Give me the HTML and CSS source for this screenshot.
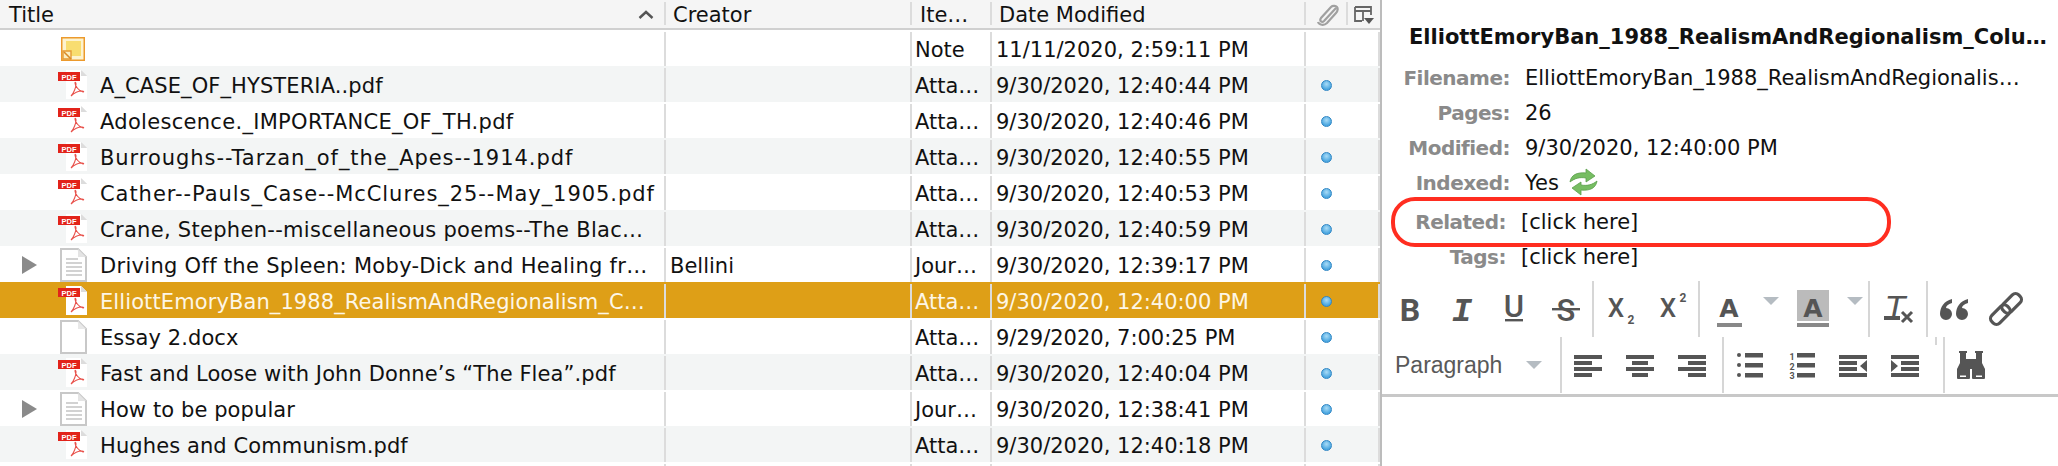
FILE: index.html
```html
<!DOCTYPE html>
<html lang="en">
<head>
    <meta charset="UTF-8">
    <title>Items</title>
    <link rel="stylesheet" href="styles.css">
</head>
<body>
<svg class="defs" width="0" height="0">
    <defs>
        <symbol id="i-pdf" viewBox="0 0 30 30">
            <path d="M9 1h15l5 5v23H9z" fill="#c9c9c9"/>
            <path d="M8 0h15l6 6v23H8z" fill="#fff"/>
            <path d="M23 0l6 6h-6z" fill="#dcdcdc"/>
            <rect x="0" y="2" width="22" height="9" fill="#e2231a"/>
            <text class="pdf-tag" x="11" y="9.6">PDF</text>
            <path d="M13 26c3-3 5-9 5-12 0-2-1-2-1-1 0 3 4 8 8 9 1 0 1-1-1-1-3 0-8 2-11 5z" fill="none" stroke="#e8504a" stroke-width="1.1"/>
        </symbol>
        <symbol id="i-doc" viewBox="0 0 30 34">
            <path d="M3 1h17l8 8v24H3z" fill="#fff" stroke="#c8c8c8" stroke-width="2"/>
            <path d="M20 1l8 8h-8z" fill="#e4e4e4"/>
            <path d="M8 11h12M8 15h16M8 19h16M8 23h16M8 27h16" stroke="#c4c4c4" stroke-width="1.6"/>
        </symbol>
        <symbol id="i-blank" viewBox="0 0 30 34">
            <path d="M3 1h17l8 8v24H3z" fill="#fff" stroke="#c8c8c8" stroke-width="2"/>
            <path d="M20 1l8 8h-8z" fill="#e8e8e8"/>
        </symbol>
    </defs>
</svg>
<div class="app">
    <div class="items">
        <div class="head">
            <div class="hcell c-title"><span>Title</span>
                <svg class="sort" width="16" height="9" viewBox="0 0 16 9"><path d="M1.500 8L8 2l6.500 6" fill="none" stroke="#555" stroke-width="2.4"/></svg>
            </div>
            <div class="hcell c-creator">Creator</div>
            <div class="hcell c-type">Ite…</div>
            <div class="hcell c-date">Date Modified</div>
            <div class="hcell c-clip">
                <svg width="24" height="22" viewBox="0 0 24 22"><path d="M20 4L8 17c-2 2-5 0-3-3L15 3c2-2 5-1 6 0s1 4-1 6L11 19c-3 3-8 2-9-1" fill="none" stroke="#a0a0a0" stroke-width="2.2"/></svg>
            </div>
            <div class="hcell c-pick">
                <svg width="20" height="18" viewBox="0 0 20 18"><path d="M1 1h16v8M1 1v14h7M1 5h16M9 5v10" fill="none" stroke="#666" stroke-width="1.8"/><path d="M10 12h10l-5 6z" fill="#555"/></svg>
            </div>
        </div>

        <div class="row">
            <div class="cell c-title">
                <span class="twisty"></span>
                <span class="icon-slot">
                    <svg class="note" width="24" height="24" viewBox="0 0 24 24">
                        <rect x="0.7" y="0.7" width="22.6" height="22.6" fill="#fdf3cf" stroke="#ec9a2c" stroke-width="1.6"/>
                        <rect x="5" y="4" width="15" height="15" fill="#f8dd70"/>
                        <path d="M2 14h8v8H2z" fill="#fbeec0" stroke="#e59a35" stroke-width="1.4"/>
                        <path d="M3 15l7 7" stroke="#d98a28" stroke-width="1.6"/>
                    </svg>
                </span>
            </div>
            <div class="cell c-creator"></div>
            <div class="cell c-type">Note</div>
            <div class="cell c-date">11/11/2020, 2:59:11 PM</div>
            <div class="cell c-attach"></div>
        </div>
        <div class="row">
            <div class="cell c-title"><span class="twisty"></span><span class="icon-slot"><svg width="30" height="30"><use href="#i-pdf"/></svg></span><span class="name">A_CASE_OF_HYSTERIA..pdf</span></div>
            <div class="cell c-creator"></div>
            <div class="cell c-type">Atta…</div>
            <div class="cell c-date">9/30/2020, 12:40:44 PM</div>
            <div class="cell c-attach"><span class="dot"></span></div>
        </div>
        <div class="row">
            <div class="cell c-title"><span class="twisty"></span><span class="icon-slot"><svg width="30" height="30"><use href="#i-pdf"/></svg></span><span class="name mid">Adolescence._IMPORTANCE_OF_TH.pdf</span></div>
            <div class="cell c-creator"></div>
            <div class="cell c-type">Atta…</div>
            <div class="cell c-date">9/30/2020, 12:40:46 PM</div>
            <div class="cell c-attach"><span class="dot"></span></div>
        </div>
        <div class="row">
            <div class="cell c-title"><span class="twisty"></span><span class="icon-slot"><svg width="30" height="30"><use href="#i-pdf"/></svg></span><span class="name wide">Burroughs--Tarzan_of_the_Apes--1914.pdf</span></div>
            <div class="cell c-creator"></div>
            <div class="cell c-type">Atta…</div>
            <div class="cell c-date">9/30/2020, 12:40:55 PM</div>
            <div class="cell c-attach"><span class="dot"></span></div>
        </div>
        <div class="row">
            <div class="cell c-title"><span class="twisty"></span><span class="icon-slot"><svg width="30" height="30"><use href="#i-pdf"/></svg></span><span class="name wide">Cather--Pauls_Case--McClures_25--May_1905.pdf</span></div>
            <div class="cell c-creator"></div>
            <div class="cell c-type">Atta…</div>
            <div class="cell c-date">9/30/2020, 12:40:53 PM</div>
            <div class="cell c-attach"><span class="dot"></span></div>
        </div>
        <div class="row">
            <div class="cell c-title"><span class="twisty"></span><span class="icon-slot"><svg width="30" height="30"><use href="#i-pdf"/></svg></span><span class="name mid">Crane, Stephen--miscellaneous poems--The Blac…</span></div>
            <div class="cell c-creator"></div>
            <div class="cell c-type">Atta…</div>
            <div class="cell c-date">9/30/2020, 12:40:59 PM</div>
            <div class="cell c-attach"><span class="dot"></span></div>
        </div>
        <div class="row">
            <div class="cell c-title"><span class="twisty open"></span><span class="icon-slot"><svg width="30" height="34"><use href="#i-doc"/></svg></span><span class="name mid">Driving Off the Spleen: Moby-Dick and Healing fr…</span></div>
            <div class="cell c-creator">Bellini</div>
            <div class="cell c-type">Jour…</div>
            <div class="cell c-date">9/30/2020, 12:39:17 PM</div>
            <div class="cell c-attach"><span class="dot"></span></div>
        </div>
        <div class="row selected">
            <div class="cell c-title"><span class="twisty"></span><span class="icon-slot"><svg width="30" height="30"><use href="#i-pdf"/></svg></span><span class="name">ElliottEmoryBan_1988_RealismAndRegionalism_C…</span></div>
            <div class="cell c-creator"></div>
            <div class="cell c-type">Atta…</div>
            <div class="cell c-date">9/30/2020, 12:40:00 PM</div>
            <div class="cell c-attach"><span class="dot"></span></div>
        </div>
        <div class="row">
            <div class="cell c-title"><span class="twisty"></span><span class="icon-slot"><svg width="30" height="34"><use href="#i-blank"/></svg></span><span class="name">Essay 2.docx</span></div>
            <div class="cell c-creator"></div>
            <div class="cell c-type">Atta…</div>
            <div class="cell c-date">9/29/2020, 7:00:25 PM</div>
            <div class="cell c-attach"><span class="dot"></span></div>
        </div>
        <div class="row">
            <div class="cell c-title"><span class="twisty"></span><span class="icon-slot"><svg width="30" height="30"><use href="#i-pdf"/></svg></span><span class="name">Fast and Loose with John Donne’s “The Flea”.pdf</span></div>
            <div class="cell c-creator"></div>
            <div class="cell c-type">Atta…</div>
            <div class="cell c-date">9/30/2020, 12:40:04 PM</div>
            <div class="cell c-attach"><span class="dot"></span></div>
        </div>
        <div class="row">
            <div class="cell c-title"><span class="twisty open"></span><span class="icon-slot"><svg width="30" height="34"><use href="#i-doc"/></svg></span><span class="name">How to be popular</span></div>
            <div class="cell c-creator"></div>
            <div class="cell c-type">Jour…</div>
            <div class="cell c-date">9/30/2020, 12:38:41 PM</div>
            <div class="cell c-attach"><span class="dot"></span></div>
        </div>
        <div class="row">
            <div class="cell c-title"><span class="twisty"></span><span class="icon-slot"><svg width="30" height="30"><use href="#i-pdf"/></svg></span><span class="name">Hughes and Communism.pdf</span></div>
            <div class="cell c-creator"></div>
            <div class="cell c-type">Atta…</div>
            <div class="cell c-date">9/30/2020, 12:40:18 PM</div>
            <div class="cell c-attach"><span class="dot"></span></div>
        </div>
        <div class="row">
            <div class="cell c-title"><span class="twisty"></span><span class="icon-slot"><svg width="30" height="30"><use href="#i-pdf"/></svg></span></div>
            <div class="cell c-creator"></div>
            <div class="cell c-type"></div>
            <div class="cell c-date"></div>
            <div class="cell c-attach"></div>
        </div>
    </div>

    <div class="panel">
        <div class="panel-title">ElliottEmoryBan_1988_RealismAndRegionalism_Colu…</div>
        <div class="meta">
            <div class="meta-row"><span class="label">Filename:</span><span>ElliottEmoryBan_1988_RealismAndRegionalis…</span></div>
            <div class="meta-row"><span class="label">Pages:</span><span>26</span></div>
            <div class="meta-row"><span class="label">Modified:</span><span>9/30/2020, 12:40:00 PM</span></div>
            <div class="meta-row"><span class="label">Indexed:</span><span>Yes</span>
                <svg class="sync" width="30" height="28" viewBox="0 0 30 28">
                    <path d="M2 14C3 7 9 4 18 5V1l9 7-9 6v-4c-6-1-11 0-16 4z" fill="#76bd62" stroke="#5a9f4b" stroke-width=".8"/>
                    <path d="M29 13c-1 7-7 10-16 9v5l-9-7 9-6v3c6 1 11 0 16-4z" fill="#76bd62" stroke="#5a9f4b" stroke-width=".8"/>
                </svg>
            </div>
            <div class="meta-row link-row related"><span class="label">Related:</span><span>[click here]</span></div>
            <div class="meta-row link-row"><span class="label">Tags:</span><span>[click here]</span></div>
            <div class="callout"></div>
        </div>

        <div class="toolbar">
            <div class="tb-row">
                <div class="tb-group">
                    <span class="btn"><svg width="40" height="40"><text class="g g-bold" x="20" y="32">B</text></svg></span>
                    <span class="btn"><svg width="40" height="40"><text class="g g-ital" x="20" y="32">I</text></svg></span>
                    <span class="btn"><svg width="40" height="40"><text class="g g-under" x="20" y="28">U</text><rect x="11" y="30" width="18" height="2.4" class="ink"/></svg></span>
                    <span class="btn"><svg width="40" height="40"><text class="g g-under" x="20" y="32">S</text><rect x="6" y="19" width="28" height="2.4" class="ink"/></svg></span>
                </div>
                <div class="tb-group">
                    <span class="btn"><svg width="40" height="40"><text class="g g-x" x="16" y="28">X</text><text class="g g-small" x="31" y="35">2</text></svg></span>
                    <span class="btn"><svg width="40" height="40"><text class="g g-x" x="16" y="28">X</text><text class="g g-small" x="31" y="13">2</text></svg></span>
                </div>
                <div class="tb-group">
                    <span class="btn btn-color"><svg width="40" height="40"><text class="g g-a" x="20" y="28">A</text><rect x="8" y="34" width="25" height="4" fill="#888"/></svg></span>
                    <span class="btn-caret"><i class="caret"></i></span>
                    <span class="btn btn-color"><svg width="40" height="40"><rect x="4" y="1" width="32" height="31" fill="#bbb"/><text class="g g-a" x="20" y="28">A</text><rect x="4" y="34" width="32" height="4" fill="#888"/></svg></span>
                    <span class="btn-caret last"><i class="caret"></i></span>
                </div>
                <div class="tb-group">
                    <span class="btn btn-clear"><svg width="40" height="40"><text class="g g-tx" x="17" y="30">T</text><rect x="6" y="27" width="16" height="4" class="ink"/><path d="M24 23l10 10M34 23L24 33" stroke="#555" stroke-width="3"/></svg></span>
                </div>
                <div class="tb-group last">
                    <span class="btn"><svg width="40" height="40"><path class="ink" d="M18 10C10 12 6 18 6 25a6 6 0 1 0 6-6c0-2 2-4 6-5z"/><path class="ink" d="M34 10C26 12 22 18 22 25a6 6 0 1 0 6-6c0-2 2-4 6-5z"/></svg></span>
                    <span class="btn"><svg width="40" height="40"><g transform="rotate(-45 20 20)" fill="none" stroke="#555" stroke-width="3.2"><rect x="1" y="14.5" width="22" height="11" rx="4.5"/><rect x="17" y="14.5" width="22" height="11" rx="4.5"/></g></svg></span>
                </div>
            </div>
            <div class="tb-row">
                <div class="tb-group select">
                    <span class="select-label">Paragraph</span><i class="caret"></i>
                </div>
                <div class="tb-group aligns">
                    <span class="btn"><svg width="40" height="40"><path class="ink" d="M6 10h28v4H6zM6 16h18v4H6zM6 22h28v4H6zM6 28h18v4H6z"/></svg></span>
                    <span class="btn"><svg width="40" height="40"><path class="ink" d="M6 10h28v4H6zM12 16h16v4H12zM6 22h28v4H6zM12 28h16v4H12z"/></svg></span>
                    <span class="btn"><svg width="40" height="40"><path class="ink" d="M6 10h28v4H6zM16 16h18v4H16zM6 22h28v4H6zM16 28h18v4H16z"/></svg></span>
                </div>
                <div class="tb-group lists">
                    <span class="btn"><svg width="40" height="40"><path class="ink" d="M15 8h18v4.500H15zM15 18h18v4.500H15zM15 28h18v4.500H15z"/><circle class="ink" cx="9" cy="10" r="2"/><circle class="ink" cx="9" cy="20" r="2"/><circle class="ink" cx="9" cy="30" r="2"/></svg></span>
                    <span class="btn"><svg width="40" height="40"><path class="ink" d="M15 8h18v4.500H15zM15 18h18v4.500H15zM15 28h18v4.500H15z"/><text class="g g-num" x="10" y="15">1</text><text class="g g-num" x="10" y="25">2</text><text class="g g-num" x="10" y="34">3</text></svg></span>
                    <span class="btn"><svg width="40" height="40"><path class="ink" d="M5 10h28v4H5zM5 16h18v4H5zM5 22h18v4H5zM5 28h28v4H5zM33 15v12l-7-6z"/></svg></span>
                    <span class="btn"><svg width="40" height="40"><path class="ink" d="M5 10h28v4H5zM15 16h18v4H15zM15 22h18v4H15zM5 28h28v4H5zM5 15v12l7-6z"/></svg></span>
                    <i class="stub"></i>
                </div>
                <div class="tb-group last">
                    <span class="btn"><svg width="40" height="40"><path class="ink" d="M8 6h8v2h-1v6h10V8h-1V6h8v2h-1v10l3 6v9a1 1 0 0 1-1 1H22a1 1 0 0 1-1-1v-9h-2v9a1 1 0 0 1-1 1H7a1 1 0 0 1-1-1v-9l3-6V8H8z"/><path d="M9 30.500h6v1.500H9zM25 30.500h6v1.500h-6z" fill="#fff"/></svg></span>
                </div>
            </div>
        </div>
        <div class="editor"></div>
    </div>
</div>
</body>
</html>
```

FILE: styles.css
```css
html,body{
    width: 100%;
    height: 100%;
}
*{
    margin:0;
    padding:0;
    box-sizing: border-box;
}
body{
    overflow: hidden;
    background: #fff;
    color: #111;
    font-family: "DejaVu Sans", "Noto Sans", sans-serif;
    font-size: 21px;
}
.defs{
    display: block;
    height: 0;
}
.app{
    display: flex;
    height: 466px;
    overflow: hidden;
}

/* item list */
.items{
    width: 1380px;
    flex: none;
}
.head{
    display: flex;
    height: 30px;
    background: #f5f5f5;
    border-bottom: 2px solid #d0d0d0;
}
.hcell{
    display: flex;
    align-items: center;
    height: 23px;
    margin-top: 2px;
    padding-top: 2px;
    line-height: 22px;
    white-space: nowrap;
    border-right: 2px solid #dcdcdc;
}
.hcell.c-title{
    justify-content: space-between;
    padding: 2px 10px 0 9px;
}
.hcell.c-creator{
    padding-left: 7px;
}
.hcell.c-type{
    padding-left: 8px;
}
.hcell.c-date{
    padding-left: 7px;
}
.c-title{
    width: 666px;
}
.c-creator{
    width: 246px;
}
.c-type{
    width: 80px;
}
.c-date{
    width: 314px;
}
.c-attach{
    width: 74px;
}
.c-clip{
    width: 42px;
    padding-left: 10px;
}
.c-pick{
    width: 32px;
    padding-left: 6px;
    border-right: none;
}
.row{
    display: flex;
    height: 36px;
    padding-top: 2px;
}
.row:nth-child(odd){
    background: #f3f5f5;
}
.row.selected{
    background: #de9f17;
    color: #fdf6e6;
}
.cell{
    display: flex;
    align-items: center;
    padding-top: 2px;
    white-space: nowrap;
    border-right: 2px solid #dcdcdc;
}
.cell.c-creator{
    padding-left: 4px;
}
.cell.c-type{
    padding-left: 3px;
}
.cell.c-date{
    padding-left: 4px;
}
.cell.c-attach{
    padding-left: 15px;
}
.twisty{
    flex: none;
    width: 58px;
    margin-top: -2px;
    padding-left: 22px;
}
.twisty.open::before{
    content: "";
    display: block;
    width: 0;
    height: 0;
    border-left: 15px solid #8a8a8a;
    border-top: 9px solid transparent;
    border-bottom: 9px solid transparent;
}
.icon-slot{
    flex: none;
    display: flex;
    align-items: center;
    justify-content: center;
    width: 30px;
    height: 34px;
    margin: -2px 12px 0 0;
}
.name{
    letter-spacing: .1px;
}
.name.mid{
    letter-spacing: .3px;
}
.name.wide{
    letter-spacing: .95px;
}
.dot{
    display: block;
    width: 11px;
    height: 11px;
    margin-top: -2px;
    border-radius: 50%;
    border: 1px solid #2f86c4;
    background: radial-gradient(circle at 50% 35%, #a9dcf7, #4aa6e0 70%);
}

/* right pane */
.panel{
    flex: 1;
    border-left: 2px solid #bcbcbc;
}
.panel-title{
    padding: 22px 0 0 27px;
    height: 60px;
    line-height: 30px;
    font-weight: bold;
    white-space: nowrap;
}
.meta{
    position: relative;
    height: 221px;
}
.meta-row{
    display: flex;
    align-items: center;
    height: 35px;
    white-space: nowrap;
}
.label{
    width: 128px;
    margin-right: 15px;
    text-align: right;
    font-size: 20px;
    font-weight: bold;
    letter-spacing: -.5px;
    color: #8a8a8a;
}
.link-row .label{
    width: 124px;
}
.related{
    margin-top: 4px;
}
.sync{
    margin-left: 9px;
    margin-top: -2px;
}
.callout{
    position: absolute;
    left: 9px;
    top: 137px;
    width: 500px;
    height: 50px;
    border: 4px solid #ff2d20;
    border-radius: 24px;
}

/* editor toolbar */
.toolbar{
    border-bottom: 3px solid #c8c8c8;
    padding-bottom: 1px;
}
.tb-row{
    display: flex;
    height: 56px;
}
.tb-group{
    display: flex;
    align-items: center;
    padding-left: 2px;
    border-right: 2px solid #d6d6d6;
}
.tb-group.last{
    border-right: none;
}
.tb-group + .tb-group{
    padding-left: 0;
}
.btn{
    display: flex;
    align-items: center;
    justify-content: center;
    width: 52px;
    height: 56px;
}
.btn svg{
    display: block;
}
.btn-color{
    width: 58px;
}
.btn-caret{
    display: flex;
    justify-content: center;
    width: 26px;
}
.btn-clear{
    width: 56px;
}
.caret{
    display: block;
    width: 0;
    height: 0;
    border-left: 8px solid transparent;
    border-right: 8px solid transparent;
    border-top: 8px solid #b5bcc2;
}
.btn-caret .caret{
    margin-top: -12px;
}
.select{
    width: 180px;
    padding: 0 18px 0 13px;
    justify-content: space-between;
}
.select-label{
    font-family: "Liberation Sans", Arial, sans-serif;
    font-size: 23px;
    color: #595959;
}
.aligns{
    width: 162px;
}
.lists{
    position: relative;
    width: 221px;
    padding-left: 3px;
}
.stub{
    position: absolute;
    right: 6px;
    top: 0;
    width: 2px;
    height: 8px;
    background: #d6d6d6;
}
.ink{
    fill: #555;
}
.g{
    fill: #555;
    text-anchor: middle;
}
.g-bold{
    font: bold 32px Roboto, sans-serif;
}
.g-ital{
    font: italic bold 34px "Liberation Mono", monospace;
}
.g-under{
    font: 500 31px Roboto, sans-serif;
}
.g-x{
    font: 500 26px Roboto, sans-serif;
}
.g-small{
    font: bold 12px Roboto, sans-serif;
}
.g-a{
    font: bold 25px "DejaVu Sans", sans-serif;
}
.g-tx{
    font: italic 500 34px "Liberation Sans", sans-serif;
}
.g-num{
    font: bold 9px Roboto, sans-serif;
}
.pdf-tag{
    font: bold 7.5px "Liberation Sans", sans-serif;
    fill: #fff;
    text-anchor: middle;
}
.editor{
    height: 68px;
}
```
